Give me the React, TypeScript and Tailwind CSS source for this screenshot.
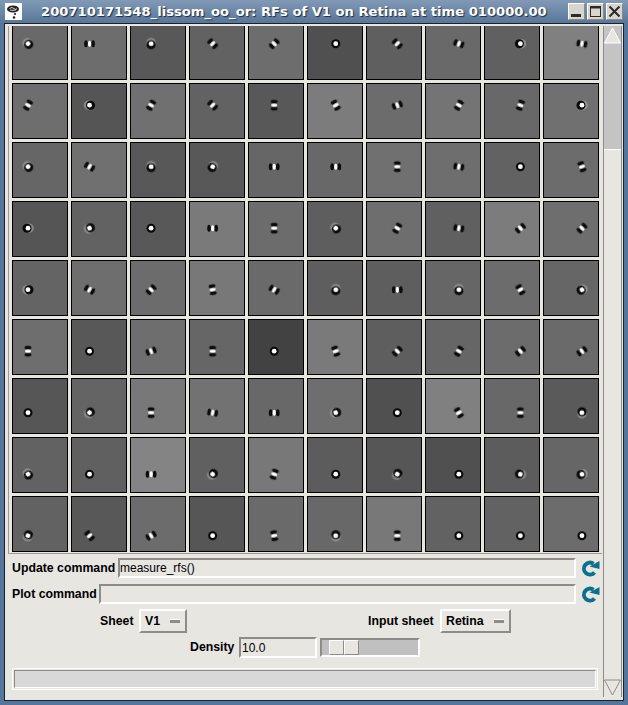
import React from 'react';

type Spot = [number, 'R' | 'L' | 'O', number];

// gray level of the plot, spot kind (R offset ring, L two lobes, O plain ring), angle of the dark side
const plots: Spot[][] = [
  [[0x69, 'R', 45], [0x6d, 'L', 0], [0x58, 'R', 90], [0x62, 'L', 45], [0x6d, 'L', -45], [0x50, 'O', 0], [0x5f, 'L', 45], [0x69, 'L', 20], [0x60, 'R', 180], [0x80, 'L', 10]],
  [[0x6e, 'L', -60], [0x55, 'R', 0], [0x70, 'L', -60], [0x62, 'L', 45], [0x58, 'L', 90], [0x7c, 'L', 60], [0x6c, 'L', -20], [0x74, 'L', -60], [0x68, 'L', -70], [0x70, 'R', 180]],
  [[0x66, 'R', 45], [0x70, 'L', 30], [0x58, 'R', 90], [0x58, 'R', 120], [0x66, 'L', 0], [0x68, 'L', 0], [0x70, 'L', 90], [0x6e, 'L', 10], [0x62, 'O', 0], [0x6c, 'L', 70]],
  [[0x55, 'R', 180], [0x62, 'R', -30], [0x58, 'O', 0], [0x7a, 'L', 0], [0x6c, 'L', 90], [0x5e, 'R', 45], [0x6e, 'L', -60], [0x60, 'L', 10], [0x7c, 'L', -40], [0x6e, 'L', -45]],
  [[0x64, 'R', 0], [0x6e, 'L', 30], [0x6c, 'L', -45], [0x78, 'L', 80], [0x6a, 'L', 30], [0x5e, 'R', 90], [0x5e, 'L', 0], [0x66, 'R', 90], [0x6c, 'L', 60], [0x66, 'R', 150]],
  [[0x6e, 'L', 90], [0x58, 'O', 0], [0x6e, 'L', -20], [0x66, 'L', 90], [0x42, 'O', 0], [0x7a, 'L', 70], [0x5e, 'L', -45], [0x66, 'L', -60], [0x6c, 'L', -40], [0x6a, 'L', -35]],
  [[0x56, 'O', 0], [0x64, 'R', -45], [0x78, 'L', 90], [0x72, 'L', 10], [0x68, 'L', 0], [0x6e, 'R', -20], [0x50, 'O', 0], [0x80, 'L', 60], [0x68, 'L', 90], [0x5a, 'R', -90]],
  [[0x62, 'R', 60], [0x60, 'O', 0], [0x84, 'L', 0], [0x60, 'R', -45], [0x78, 'L', -70], [0x5c, 'O', 0], [0x56, 'R', -60], [0x50, 'O', 0], [0x5c, 'R', -170], [0x66, 'R', 160]],
  [[0x62, 'R', -70], [0x58, 'L', 50], [0x6c, 'L', -30], [0x56, 'O', 0], [0x6a, 'L', 80], [0x68, 'R', -90], [0x78, 'L', 90], [0x62, 'O', 0], [0x62, 'O', 0], [0x6c, 'O', 0]],
];

const RfPlot = ({ spot, row, col }: { spot: Spot; row: number; col: number }) => {
  const [gray, kind, angle] = spot;
  const x = 15 + col * 2.55;
  const y = 18.7 + row * 2.5;
  return (
    <div className="border border-black w-[56px] h-[56px]">
      <svg width="54" height="54" className="block">
        <rect width="54" height="54" fill={`rgb(${gray},${gray},${gray})`} />
        <g transform={`translate(${x} ${y}) rotate(${angle})`} className="blur-[0.6px]">
          {kind === 'L' ? (
            <>
              <ellipse cx="-3.6" cy="0" rx="1.8" ry="3.5" fill="#0c0c0c" />
              <ellipse cx="3.6" cy="0" rx="1.8" ry="3.5" fill="#0c0c0c" />
              <ellipse cx="0" cy="0" rx="1.6" ry="3" fill="#ffffff" />
            </>
          ) : (
            <>
              <circle cx="-1" cy="0" r="4.8" fill="#a8a8a8" fillOpacity={kind === 'R' ? 0.6 : 0} />
              <circle cx={kind === 'R' ? 1 : 0} cy="0" r="4.5" fill="#0a0a0a" />
              <circle cx="0" cy="0" r="2.4" fill="#ffffff" />
            </>
          )}
        </g>
      </svg>
    </div>
  );
};

const Sunken = ({ className, children }: { className: string; children?: React.ReactNode }) => (
  <div className={`border-2 border-t-[#8e8c88] border-l-[#8e8c88] border-b-white border-r-white ${className}`}>
    {children}
  </div>
);

const OptionMenu = ({ label, className }: { label: string; className: string }) => (
  <div className={`h-[24px] flex items-center border-2 border-t-white border-l-white border-b-[#8e8c88] border-r-[#8e8c88] ${className}`}>
    <span className="font-bold text-[12.3px] pl-[4px]">{label}</span>
    <div className="ml-auto mr-[5px] w-[10px] h-[4px] bg-[#8e8c88] border-t border-white" />
  </div>
);

const RefreshIcon = () => (
  <svg width="19" height="17" viewBox="0 0 19 17" className="ml-[5px] shrink-0">
    <path d="M12.5 3.8 A6 6 0 1 0 13.5 12.5" fill="none" stroke="#0b6f90" strokeWidth="4" />
    <path d="M8.5 6.5 L18.5 1 L18.5 9 Z" fill="#0b6f90" />
  </svg>
);

const TitleButton = ({ children }: { children: React.ReactNode }) => (
  <div className="w-[17px] h-[17px] bg-[#d8d5cd] border border-t-white border-l-white border-b-[#8a8a86] border-r-[#8a8a86]">
    <svg width="15" height="15" viewBox="0 0 15 15" className="block">{children}</svg>
  </div>
);

export default function App() {
  return (
    <div className="w-[628px] h-[705px] flex flex-col bg-[#56759b] px-[4px] pb-[4px] font-['Liberation_Sans',sans-serif] text-black overflow-hidden">
      {/* Title bar */}
      <div className="h-[23px] -mx-[4px] pl-[5px] pr-[5px] flex items-center bg-gradient-to-b from-[#8199b6] to-[#587799] shrink-0">
        <div className="w-[17px] h-[17px] bg-white shrink-0">
          <svg width="17" height="17" viewBox="0 0 17 17" className="block">
            <ellipse cx="8" cy="6" rx="6" ry="3.6" fill="#222" />
            <path d="M4.5 5.5 Q7 3.5 9 5.5 T12 5.5 M5 7 Q8 8 11 6.8" stroke="#fff" strokeWidth="0.8" fill="none" />
            <circle cx="10" cy="11" r="1.1" fill="#222" />
            <circle cx="9" cy="14.5" r="1.3" fill="#222" />
          </svg>
        </div>
        <span className="ml-[19px] font-['DejaVu_Sans',sans-serif] font-bold text-[13.13px] text-white whitespace-nowrap [text-shadow:1px_1px_1px_#1c2c44]">
          200710171548_lissom_oo_or: RFs of V1 on Retina at time 010000.00
        </span>
        <div className="ml-auto flex gap-[2px]">
          <TitleButton>
            <rect x="2" y="10" width="10" height="3" fill="#2a2a2a" />
          </TitleButton>
          <TitleButton>
            <rect x="2.5" y="2.5" width="10" height="10" fill="none" stroke="#2a2a2a" strokeWidth="1" />
            <rect x="2" y="2" width="11" height="2.5" fill="#2a2a2a" />
          </TitleButton>
          <TitleButton>
            <path d="M2.5 2.5 L12.5 12.5 M12.5 2.5 L2.5 12.5" stroke="#2a2a2a" strokeWidth="2" />
          </TitleButton>
        </div>
      </div>

      {/* Client area */}
      <div className="flex-1 flex border border-[#1a2230] bg-[#e8e6e1] min-h-0">
        <div className="w-[597px] flex flex-col">
          <div className="ml-[3px] mt-[2px] pl-[3px] border-l border-[#9c9a96] border-b pb-[1px]">
            <div className="h-[526px] overflow-hidden">
              <div className="-mt-[2px] grid grid-cols-[repeat(10,56px)] gap-[3px]">
                {plots.map((cells, r) =>
                  cells.map((spot, c) => <RfPlot key={`${r}-${c}`} spot={spot} row={r} col={c} />)
                )}
              </div>
            </div>
          </div>

          <div className="mt-[4px] pl-[7px] pr-[2px] flex items-center h-[20px]">
            <span className="w-[106px] shrink-0 font-bold text-[12.3px] whitespace-nowrap">Update command</span>
            <Sunken className="flex-1 h-[20px] flex items-center text-[12px]">measure_rfs()</Sunken>
            <RefreshIcon />
          </div>

          <div className="mt-[6px] pl-[7px] pr-[2px] flex items-center h-[20px]">
            <span className="w-[87px] shrink-0 font-bold text-[12.3px] whitespace-nowrap">Plot command</span>
            <Sunken className="flex-1 h-[20px]" />
            <RefreshIcon />
          </div>

          <div className="mt-[5px] pl-[95px] flex items-center h-[24px]">
            <span className="w-[39px] shrink-0 font-bold text-[12.3px]">Sheet</span>
            <OptionMenu label="V1" className="w-[48px]" />
            <span className="ml-[181px] w-[72px] shrink-0 font-bold text-[12.3px] whitespace-nowrap">Input sheet</span>
            <OptionMenu label="Retina" className="w-[71px]" />
          </div>

          <div className="mt-[4px] pl-[185px] flex items-center h-[21px]">
            <span className="w-[49px] shrink-0 font-bold text-[12.3px]">Density</span>
            <Sunken className="w-[78px] h-[21px] flex items-center pl-[1px] text-[12px]">10.0</Sunken>
            <Sunken className="ml-[3px] w-[100px] h-[19px] bg-[#c0c0c0] pl-[7px] flex">
              <div className="w-[15px] h-[15px] bg-[#e8e6e1] border border-t-white border-l-white border-b-[#8e8c88] border-r-[#8e8c88]" />
              <div className="w-[15px] h-[15px] bg-[#e8e6e1] border border-t-white border-l-white border-b-[#8e8c88] border-r-[#8e8c88]" />
            </Sunken>
          </div>

          <div className="mt-[10px] ml-[7px] w-[586px] h-[22px] border border-white p-px">
            <div className="h-full bg-[#d8d8d8] border border-t-[#8e8c88] border-l-[#8e8c88] border-b-white border-r-white" />
          </div>
        </div>

        {/* Scrollbar */}
        <div className="w-[19px] ml-px mt-[2px] mb-[3px] flex flex-col border-x border-[#8e8c88]">
          <div className="bg-[#c4c4c4]">
            <svg width="17" height="18" className="block">
              <path d="M8.5 2 L16.5 17 L0.5 17 Z" fill="#e8e6e1" stroke="#ffffff" strokeWidth="1" />
            </svg>
          </div>
          <div className="h-[106px] bg-[#c4c4c4] border-b border-white" />
          <div className="flex-1" />
          <svg width="17" height="18" className="block">
            <path d="M0.5 1 L16.5 1 L8.5 16 Z" fill="#e8e6e1" stroke="#8e8c88" strokeWidth="1" />
          </svg>
        </div>
      </div>
    </div>
  );
}
